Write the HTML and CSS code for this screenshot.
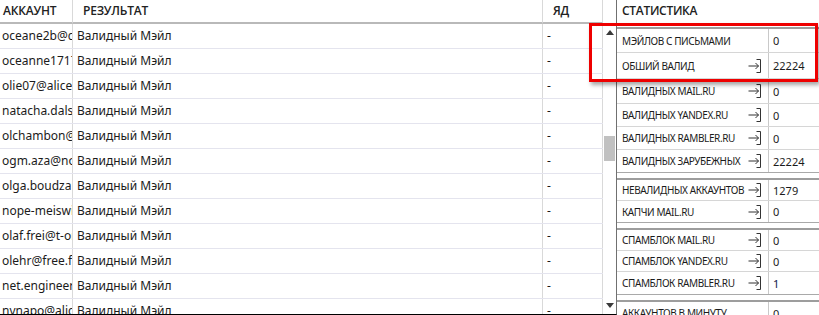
FILE: index.html
```html
<!DOCTYPE html>
<html lang="ru">
<head>
<meta charset="utf-8">
<title>Статистика</title>
<link rel="stylesheet" href="styles.css">
</head>
<body>
<div class="app">
  <section class="grid">
    <div class="ghead">
      <div class="hc c-acc pad-acc">АККАУНТ</div>
      <div class="hc c-res pad-h">РЕЗУЛЬТАТ</div>
      <div class="hc c-yd pad-h">ЯД</div>
      <div class="hc c-sb"></div>
    </div>
    <div class="gbody">
      <div class="rows">
        <div class="row"><div class="cell c-acc">oceane2b@club-internet.fr</div><div class="cell c-res">Валидный Мэйл</div><div class="cell c-yd">-</div></div>
        <div class="row"><div class="cell c-acc">oceanne1717@hotmail.fr</div><div class="cell c-res">Валидный Мэйл</div><div class="cell c-yd">-</div></div>
        <div class="row"><div class="cell c-acc">olie07@alice.it</div><div class="cell c-res">Валидный Мэйл</div><div class="cell c-yd">-</div></div>
        <div class="row"><div class="cell c-acc">natacha.dalstein@orange.fr</div><div class="cell c-res">Валидный Мэйл</div><div class="cell c-yd">-</div></div>
        <div class="row"><div class="cell c-acc">olchambon@free.fr</div><div class="cell c-res">Валидный Мэйл</div><div class="cell c-yd">-</div></div>
        <div class="row"><div class="cell c-acc">ogm.aza@nordnet.fr</div><div class="cell c-res">Валидный Мэйл</div><div class="cell c-yd">-</div></div>
        <div class="row"><div class="cell c-acc">olga.boudzanov@gmail.com</div><div class="cell c-res">Валидный Мэйл</div><div class="cell c-yd">-</div></div>
        <div class="row"><div class="cell c-acc">nope-meiswinkel@web.de</div><div class="cell c-res">Валидный Мэйл</div><div class="cell c-yd">-</div></div>
        <div class="row"><div class="cell c-acc">olaf.frei@t-online.de</div><div class="cell c-res">Валидный Мэйл</div><div class="cell c-yd">-</div></div>
        <div class="row"><div class="cell c-acc">olehr@free.fr</div><div class="cell c-res">Валидный Мэйл</div><div class="cell c-yd">-</div></div>
        <div class="row"><div class="cell c-acc">net.engineer@laposte.net</div><div class="cell c-res">Валидный Мэйл</div><div class="cell c-yd">-</div></div>
        <div class="row"><div class="cell c-acc">nvnapo@alice.it</div><div class="cell c-res">Валидный Мэйл</div><div class="cell c-yd">-</div></div>
      </div>
      <div class="sb">
        <div class="sb-btn"><span class="tri-up"></span></div>
        <div class="sb-track"><div class="sb-thumb"></div></div>
        <div class="sb-btn"><span class="tri-down"></span></div>
      </div>
    </div>
  </section>

  <section class="stats">
    <div class="stats-head">СТАТИСТИКА</div>

    <div class="grp">
      <div class="srow h24"><div class="lab"><span>Мэйлов с письмами</span></div><div class="val">0</div></div>
      <div class="srow h26"><div class="lab"><span>Обший валид</span><svg class="ico" viewBox="0 0 14 16"><path d="M8.5 1.5H12.5V14.5H8.5M0.5 8H10.5M7.5 5L10.5 8L7.5 11"/></svg></div><div class="val">22224</div></div>
      <div class="srow h25"><div class="lab"><span>Валидных mail.ru</span><svg class="ico" viewBox="0 0 14 16"><path d="M8.5 1.5H12.5V14.5H8.5M0.5 8H10.5M7.5 5L10.5 8L7.5 11"/></svg></div><div class="val">0</div></div>
      <div class="srow h23"><div class="lab"><span>Валидных yandex.ru</span><svg class="ico" viewBox="0 0 14 16"><path d="M8.5 1.5H12.5V14.5H8.5M0.5 8H10.5M7.5 5L10.5 8L7.5 11"/></svg></div><div class="val">0</div></div>
      <div class="srow h23"><div class="lab"><span>Валидных rambler.ru</span><svg class="ico" viewBox="0 0 14 16"><path d="M8.5 1.5H12.5V14.5H8.5M0.5 8H10.5M7.5 5L10.5 8L7.5 11"/></svg></div><div class="val">0</div></div>
      <div class="srow h22"><div class="lab"><span>Валидных зарубежных</span><svg class="ico" viewBox="0 0 14 16"><path d="M8.5 1.5H12.5V14.5H8.5M0.5 8H10.5M7.5 5L10.5 8L7.5 11"/></svg></div><div class="val">22224</div></div>
    </div>

    <div class="grp">
      <div class="srow h21"><div class="lab"><span>Невалидных аккаунтов</span><svg class="ico" viewBox="0 0 14 16"><path d="M8.5 1.5H12.5V14.5H8.5M0.5 8H10.5M7.5 5L10.5 8L7.5 11"/></svg></div><div class="val">1279</div></div>
      <div class="srow h21"><div class="lab"><span>Капчи mail.ru</span><svg class="ico" viewBox="0 0 14 16"><path d="M8.5 1.5H12.5V14.5H8.5M0.5 8H10.5M7.5 5L10.5 8L7.5 11"/></svg></div><div class="val">0</div></div>
    </div>

    <div class="grp gap6">
      <div class="srow h21"><div class="lab"><span>Спамблок mail.ru</span><svg class="ico" viewBox="0 0 14 16"><path d="M8.5 1.5H12.5V14.5H8.5M0.5 8H10.5M7.5 5L10.5 8L7.5 11"/></svg></div><div class="val">0</div></div>
      <div class="srow h21"><div class="lab"><span>Спамблок yandex.ru</span><svg class="ico" viewBox="0 0 14 16"><path d="M8.5 1.5H12.5V14.5H8.5M0.5 8H10.5M7.5 5L10.5 8L7.5 11"/></svg></div><div class="val">0</div></div>
      <div class="srow h22"><div class="lab"><span>Спамблок rambler.ru</span><svg class="ico" viewBox="0 0 14 16"><path d="M8.5 1.5H12.5V14.5H8.5M0.5 8H10.5M7.5 5L10.5 8L7.5 11"/></svg></div><div class="val val-blue">1</div></div>
    </div>

    <div class="grp">
      <div class="srow h22"><div class="lab"><span>Аккаунтов в минуту</span></div><div class="val">0</div></div>
    </div>
  </section>

  <div class="annot"></div>
</div>
</body>
</html>
```

FILE: styles.css
```css
html, body {
  margin: 0;
  padding: 0;
  background: #ffffff;
}

body {
  font-family: "Noto Sans", "Open Sans", sans-serif;
  color: #1b1b1b;
}

.app {
  position: relative;
  display: flex;
  width: 819px;
  height: 315px;
  overflow: hidden;
  background: #ffffff;
}

/* ---------- left data grid ---------- */
.grid {
  flex: none;
  width: 616px;
  height: 314px;
  display: flex;
  flex-direction: column;
  border-right: 1px solid #707070;
  border-bottom: 1px solid #000000;
}

.ghead {
  flex: none;
  display: flex;
  height: 24px;
}

.hc {
  box-sizing: border-box;
  height: 24px;
  border-bottom: 2px solid #b9b9b9;
  border-right: 1px solid #d9d9d9;
  font-family: "Open Sans", "Noto Sans", sans-serif;
  font-weight: 600;
  font-size: 12px;
  letter-spacing: -0.2px;
  line-height: 22px;
  color: #222;
  white-space: nowrap;
  overflow: hidden;
}

.pad-acc { padding-left: 3px; }
.pad-h { padding-left: 10px; }

.c-acc { width: 73px; }
.c-res { width: 470px; }
.c-yd { width: 60px; }

.hc.c-sb {
  width: 13px;
  border-bottom: none;
  border-right: none;
}

.gbody {
  flex: 1;
  display: flex;
  min-height: 0;
}

.rows {
  width: 603px;
  overflow: hidden;
}

.row {
  display: flex;
  height: 25px;
  box-sizing: border-box;
  border-bottom: 1px solid #e4e4ee;
}

.cell {
  box-sizing: border-box;
  height: 24px;
  border-right: 1px solid #d9d9d9;
  font-size: 12px;
  line-height: 24px;
  white-space: nowrap;
  overflow: hidden;
  text-overflow: clip;
  padding-left: 4px;
}

.cell.c-acc { padding-left: 2px; }

/* scrollbar */
.sb {
  width: 13px;
  display: flex;
  flex-direction: column;
  background: #ffffff;
}

.sb-btn {
  flex: none;
  height: 17px;
  display: flex;
  align-items: center;
  justify-content: center;
}

.tri-up, .tri-down {
  width: 0;
  height: 0;
  border-left: 4px solid transparent;
  border-right: 4px solid transparent;
}

.tri-up { border-bottom: 5px solid #3a3a3a; }
.tri-down { border-top: 5px solid #3a3a3a; }

.sb-track {
  flex: 1;
  min-height: 0;
}

.sb-thumb {
  margin: 95px 1px 0 1px;
  height: 25px;
  background: #c1c1c1;
}

/* ---------- statistics panel ---------- */
.stats {
  flex: 1;
  min-width: 0;
}

.stats-head {
  height: 27px;
  padding-left: 5px;
  font-family: "Open Sans", "Noto Sans", sans-serif;
  font-weight: 600;
  font-size: 12px;
  letter-spacing: -0.3px;
  line-height: 21px;
  color: #222;
}

.grp {
  border-top: 2px solid #9d9d9d;
  border-bottom: 1px solid #a9a9a9;
  margin-bottom: 5px;
}

.grp.gap6 { margin-top: 6px; }
.grp + .grp.gap6 { margin-top: 1px; }

.srow {
  display: flex;
  box-sizing: border-box;
  border-bottom: 1px solid #d6d6d6;
}

.srow:last-child { border-bottom: none; }

.h21 { height: 21px; }
.h22 { height: 22px; }
.h23 { height: 23px; }
.h24 { height: 24px; }
.h25 { height: 25px; }
.h26 { height: 26px; }

.lab {
  box-sizing: border-box;
  width: 152px;
  flex: none;
  display: flex;
  align-items: center;
  justify-content: space-between;
  padding: 0 6px 0 5px;
  border-right: 1px solid #c9c9c9;
  font-size: 10px;
  letter-spacing: -0.4px;
  text-transform: uppercase;
  white-space: nowrap;
  color: #1b1b1b;
}

.val {
  display: flex;
  align-items: center;
  padding-left: 4px;
  font-size: 11px;
  color: #1b1b1b;
}

.val-blue { color: #10204a; }

.ico {
  width: 14px;
  height: 16px;
  flex: none;
  margin-left: 4px;
  fill: none;
  stroke: #333;
  stroke-width: 1;
}

/* ---------- annotation overlay ---------- */
.annot {
  position: absolute;
  left: 589px;
  top: 23px;
  width: 229px;
  height: 59px;
  box-sizing: border-box;
  border: 3px solid #ee0000;
  box-shadow: 2px 3px 4px rgba(0, 0, 0, 0.35);
  pointer-events: none;
}
```
